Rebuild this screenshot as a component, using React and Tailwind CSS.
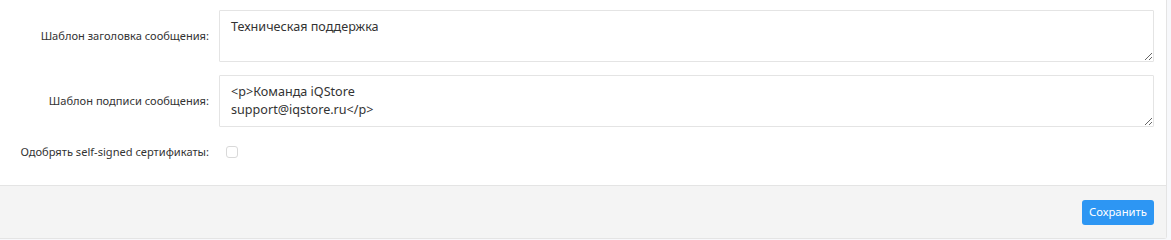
export default function App() {
  const font = { fontFamily: '"Noto Sans", "Open Sans", sans-serif' };

  return (
    <div className="flex h-[240px] w-full items-start bg-[#f7f8fb]" style={font}>
      <div className="flex h-[239px] w-[1167px] flex-col rounded-br-[3px] border-r border-b border-[#e4e4e4] bg-white">
        <div className="flex flex-col gap-[13px] pt-[10px]">
          <div className="flex items-center">
            <label className="w-[219px] pr-[10px] text-right text-[11.1px] text-[#333]">
              Шаблон заголовка сообщения:
            </label>
            <textarea
              defaultValue="Техническая поддержка"
              className="h-[52px] w-[935px] resize-y rounded-[1px] border border-[#e4e4e4] px-[11px] pt-[7px] pb-[3px] text-[12.6px] leading-[18px] text-[#333] outline-none"
            />
          </div>

          <div className="flex items-center">
            <label className="w-[219px] pr-[10px] text-right text-[11.1px] text-[#333]">
              Шаблон подписи сообщения:
            </label>
            <textarea
              defaultValue={"<p>Команда iQStore\nsupport@iqstore.ru</p>"}
              className="h-[52px] w-[935px] resize-y rounded-[1px] border border-[#e4e4e4] px-[11px] pt-[7px] pb-[3px] text-[12.6px] leading-[18px] text-[#333] outline-none"
            />
          </div>

          <div className="flex h-[24px] items-center">
            <label className="w-[219px] pr-[10px] text-right text-[11.1px] text-[#333]">
              Одобрять self-signed сертификаты:
            </label>
            <span className="ml-[7px] h-[12px] w-[12px] rounded-[3px] border border-[#d9d9d9] bg-white" />
          </div>
        </div>

        <div className="mt-auto flex h-[53px] items-center justify-end border-t border-[#e4e4e4] bg-[#f4f4f4] pr-[12px]">
          <button className="h-[25px] w-[72px] rounded-[3px] bg-[#2d96f3] text-[11.3px] text-white">
            Сохранить
          </button>
        </div>
      </div>
    </div>
  );
}
